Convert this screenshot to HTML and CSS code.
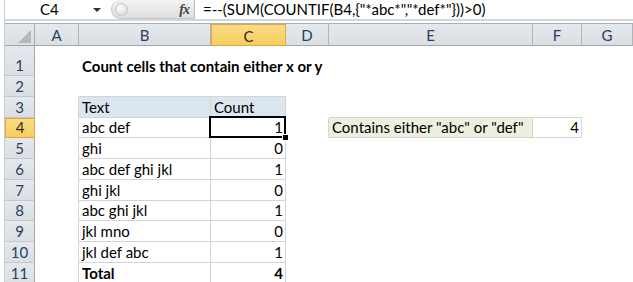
FILE: index.html
```html
<!DOCTYPE html>
<html>
<head>
<meta charset="utf-8">
<link rel="stylesheet" href="styles.css">
</head>
<body>
<div class="app">
  <div class="fbar">
    <div class="name">C4</div>
    <div class="arrow"></div>
    <div class="pill"><span class="knob"></span><span class="fx">fx</span></div>
    <div class="formula">=--(SUM(COUNTIF(B4,{"*abc*","*def*"}))&gt;0)</div>
  </div>
  <div class="gap"></div>
  <div class="sheet">
    <div class="corner"><svg width="13" height="13" viewBox="0 0 13 13"><polygon points="13,0 13,13 0,13" fill="#b5b9be"/></svg></div>
    <div class="ch">A</div><div class="ch">B</div><div class="ch on">C</div><div class="ch">D</div><div class="ch">E</div><div class="ch">F</div><div class="ch">G</div>

    <div class="rh">1</div><div class="c"></div><div class="c b">Count cells that contain either x or y</div><div class="c"></div><div class="c"></div><div class="c"></div><div class="c"></div><div class="c"></div>

    <div class="rh">2</div><div class="c"></div><div class="c bb"></div><div class="c bb"></div><div class="c"></div><div class="c"></div><div class="c"></div><div class="c"></div>

    <div class="rh">3</div><div class="c br"></div><div class="c br bb th">Text</div><div class="c br bb th">Count</div><div class="c"></div><div class="c bb"></div><div class="c bb"></div><div class="c"></div>

    <div class="rh on">4</div><div class="c br"></div><div class="c br bb">abc def</div><div class="c br bb num sel">1<span class="selbox"></span><span class="handle"></span></div><div class="c br"></div><div class="c br bb tg">Contains either "abc" or "def"</div><div class="c br bb num">4</div><div class="c"></div>

    <div class="rh">5</div><div class="c br"></div><div class="c br bb">ghi</div><div class="c br bb num">0</div><div class="c"></div><div class="c"></div><div class="c"></div><div class="c"></div>

    <div class="rh">6</div><div class="c br"></div><div class="c br bb">abc def ghi jkl</div><div class="c br bb num">1</div><div class="c"></div><div class="c"></div><div class="c"></div><div class="c"></div>

    <div class="rh">7</div><div class="c br"></div><div class="c br bb">ghi jkl</div><div class="c br bb num">0</div><div class="c"></div><div class="c"></div><div class="c"></div><div class="c"></div>

    <div class="rh">8</div><div class="c br"></div><div class="c br bb">abc ghi jkl</div><div class="c br bb num">1</div><div class="c"></div><div class="c"></div><div class="c"></div><div class="c"></div>

    <div class="rh">9</div><div class="c br"></div><div class="c br bb">jkl mno</div><div class="c br bb num">0</div><div class="c"></div><div class="c"></div><div class="c"></div><div class="c"></div>

    <div class="rh">10</div><div class="c br"></div><div class="c br bb">jkl def abc</div><div class="c br bb num">1</div><div class="c"></div><div class="c"></div><div class="c"></div><div class="c"></div>

    <div class="rh">11</div><div class="c br"></div><div class="c br bb b">Total</div><div class="c br bb num b">4</div><div class="c"></div><div class="c"></div><div class="c"></div><div class="c"></div>
  </div>
</div>
</body>
</html>
```
FILE: styles.css
```css
html, body {
  margin: 0;
  padding: 0;
  background: #ffffff;
  overflow: hidden;
}
.app {
  margin-left: 4px;
  border-left: 1px solid #c9ced4;
  height: 282px;
  font-family: Lato, "Open Sans", sans-serif;
  font-size: 15px;
  color: #000;
  overflow: hidden;
}
.fbar {
  display: flex;
  align-items: center;
  height: 19px;
  border-bottom: 2px solid #d3d6da;
  background: #fff;
}
.name {
  width: 53px;
  padding-left: 35px;
  font-size: 15px;
  line-height: 19px;
}
.arrow {
  width: 0;
  height: 0;
  border-left: 4px solid transparent;
  border-right: 4px solid transparent;
  border-top: 4px solid #333;
  margin-top: 1px;
}
.pill {
  margin-left: 10px;
  width: 84px;
  height: 19px;
  box-sizing: border-box;
  border: 1px solid #c4c4c4;
  border-right: 1px solid #b8b8b8;
  border-top: none;
  border-radius: 10px 0 0 10px;
  background: linear-gradient(#f3f3f3, #dedede);
  display: flex;
  align-items: center;
  justify-content: space-between;
  padding: 0 5px 0 3px;
}
.knob {
  width: 11px;
  height: 11px;
  border-radius: 50%;
  background: radial-gradient(circle at 40% 35%, #ffffff, #e4e4e4 60%, #c8c8c8);
  border: 1px solid #c6c6c6;
}
.fx {
  font-family: "Liberation Serif", serif;
  font-style: italic;
  font-weight: bold;
  font-size: 14px;
  color: #444;
  letter-spacing: -1px;
  line-height: 19px;
}
.formula {
  padding-left: 8px;
  line-height: 19px;
  white-space: nowrap;
}
.gap {
  height: 2px;
  background: #fff;
}
.sheet {
  display: grid;
  grid-template-columns: 30px 44px 132px 75px 43px 204px 49px 1fr;
  grid-template-rows: 22px 30px repeat(10, 20.75px);
  border-top: 1px solid #a9aeb5;
}
.corner, .ch, .rh {
  background: linear-gradient(#e5e8ec, #dbdfe4);
  color: #27405e;
  box-sizing: border-box;
  display: flex;
  align-items: center;
  justify-content: center;
}
.corner {
  border-right: 1px solid #a7adb4;
  border-bottom: 1px solid #9fa6ae;
  align-items: flex-end;
  justify-content: flex-end;
  padding: 0 3px 2px 0;
}
.ch {
  border-right: 1px solid #b0b5bb;
  border-bottom: 1px solid #9fa6ae;
  padding-top: 1px;
}
.rh {
  border-right: 1px solid #9fa6ae;
  border-bottom: 1px solid #c3c8ce;
  align-items: flex-end;
  padding-bottom: 0;
  line-height: 19px;
}
.ch.on, .rh.on {
  background: linear-gradient(#fbdd86, #f6cd5e);
  border: 1px solid #e2a73d;
  color: #2b2b2b;
}
.c {
  box-sizing: border-box;
  display: flex;
  align-items: flex-end;
  padding: 0 3px 0 3px;
  white-space: nowrap;
  line-height: 19px;
  min-width: 0;
}
.b { font-weight: bold; }
.br { border-right: 1px solid #d4d4d4; }
.bb { border-bottom: 1px solid #d4d4d4; }
.th { background: #dce6f1; }
.tg { background: #ebf1de; }
.num { justify-content: flex-end; padding-right: 2px; }
.sel { position: relative; }
.selbox {
  position: absolute;
  left: -2px;
  top: -2px;
  right: -1px;
  bottom: -1px;
  border: 2px solid #000;
}
.handle {
  position: absolute;
  right: -4px;
  bottom: -4px;
  width: 5px;
  height: 5px;
  background: #000;
  border: 1px solid #fff;
}
```
